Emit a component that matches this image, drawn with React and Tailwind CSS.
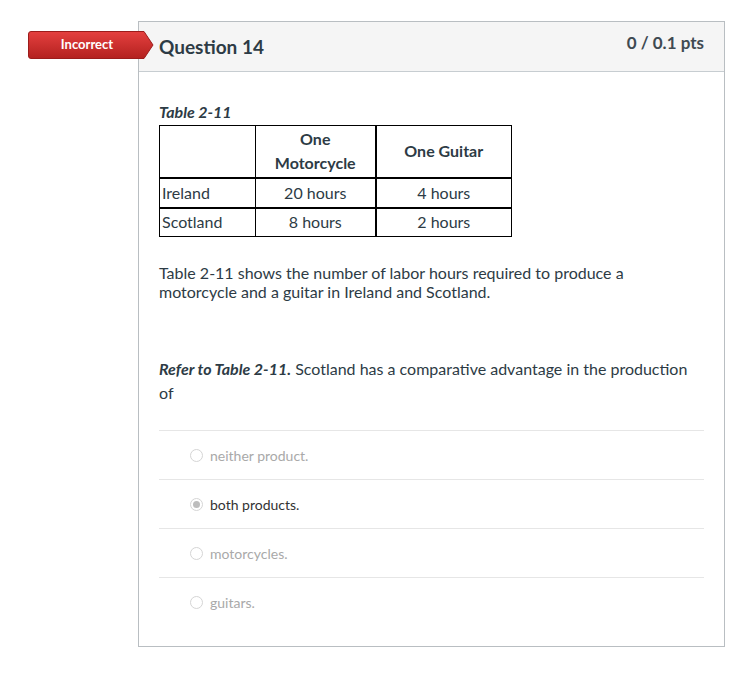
export default function App() {
  const answers = [
    { label: "neither product.", selected: false },
    { label: "both products.", selected: true },
    { label: "motorcycles.", selected: false },
    { label: "guitars.", selected: false },
  ]

  return (
    <div className="min-h-screen bg-white pt-[21px] font-['Lato','Noto_Sans',sans-serif] text-[#2d3b45]">
      <div className="relative ml-[138px] w-[587px] h-[626px] border border-[#b9bec2]">
        {/* incorrect badge */}
        <div className="absolute left-[-111px] top-[9px] w-[126px] h-[28px]">
          <svg width="126" height="28" viewBox="0 0 126 28" className="absolute inset-0">
            <defs>
              <linearGradient id="bad" x1="0" y1="0" x2="0" y2="1">
                <stop offset="0" stopColor="#e5403f" />
                <stop offset="1" stopColor="#b3211f" />
              </linearGradient>
            </defs>
            <path d="M3 0.5 H116 L125 14 L116 27.5 H3 Q0.5 27.5 0.5 25 V3 Q0.5 0.5 3 0.5 Z" fill="url(#bad)" stroke="#9c1c1b" strokeWidth="1" />
          </svg>
          <div className="relative w-[118px] h-[28px] flex items-center justify-center text-white text-[13px] font-bold">
            Incorrect
          </div>
        </div>

        <div className="h-[50px] bg-[#f5f5f5] border-b border-[#c7cdd1] flex items-start justify-between pl-[20px] pr-[20px]">
          <div className="text-[19px] font-bold mt-[12px] leading-[26px]">Question 14</div>
          <div className="text-[17px] font-bold mt-[10px] leading-[22px] text-[#3f4a52]">0 / 0.1 pts</div>
        </div>

        <div className="pl-[20px] pr-[20px]">
          <div className="mt-[30px] text-[16px] font-bold italic leading-[20px]">Table 2-11</div>
          <table className="mt-[3px] border-collapse text-[16px] text-[#2d3b45]">
            <tbody>
              <tr className="h-[52px]">
                <td className="w-[96px] border border-black"></td>
                <td className="w-[120px] border border-black border-r-2 text-center font-bold leading-[24px]">
                  One
                  <br />
                  Motorcycle
                </td>
                <td className="w-[136px] border border-black text-center font-bold">One Guitar</td>
              </tr>
              <tr className="h-[30px]">
                <td className="border border-black border-t-2 px-[2px]">Ireland</td>
                <td className="border border-black border-t-2 border-r-2 text-center">20 hours</td>
                <td className="border border-black border-t-2 text-center">4 hours</td>
              </tr>
              <tr className="h-[29px]">
                <td className="border border-black border-t-2 px-[2px]">Scotland</td>
                <td className="border border-black border-t-2 border-r-2 text-center">8 hours</td>
                <td className="border border-black border-t-2 text-center">2 hours</td>
              </tr>
            </tbody>
          </table>

          <p className="mt-[26px] text-[16px] leading-[19px]">
            Table 2-11 shows the number of labor hours required to produce a
            <br />
            motorcycle and a guitar in Ireland and Scotland.
          </p>

          <p className="mt-[56px] text-[16px] leading-[24px]">
            <span className="font-bold italic">Refer to Table 2-11.</span> Scotland has a comparative advantage in the production of
          </p>

          <div className="mt-[25px]">
            {answers.map((a) => (
              <div key={a.label} className="h-[49px] border-t border-[#e6e6e6] flex items-center pl-[31px]">
                <span className="w-[13px] h-[13px] rounded-full border border-[#d5d5d5] bg-white flex items-center justify-center">
                  {a.selected && <span className="w-[7px] h-[7px] rounded-full bg-[#bdbdbd]"></span>}
                </span>
                <span className={"ml-[7px] text-[14px] " + (a.selected ? "text-[#333]" : "text-[#a9a9a9]")}>
                  {a.label}
                </span>
              </div>
            ))}
          </div>
        </div>
      </div>
    </div>
  )
}
